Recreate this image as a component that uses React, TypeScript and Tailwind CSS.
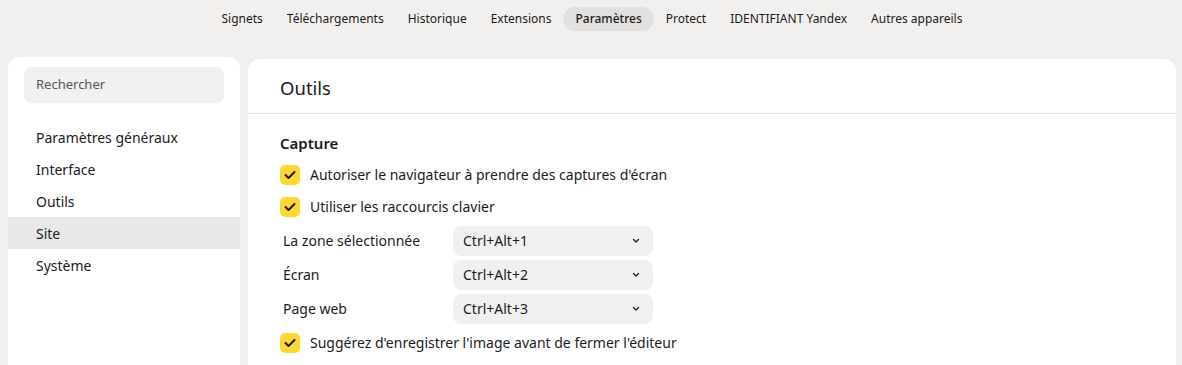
import React from "react";

const font = { fontFamily: '"Noto Sans", "Open Sans", sans-serif' };

function Check() {
  return (
    <span className="flex h-5 w-5 shrink-0 items-center justify-center rounded-[5px] bg-[#fdd835]">
      <svg width="12" height="10" viewBox="0 0 12 10" fill="none">
        <path d="M1.5 5 L4.5 8 L10.5 2" stroke="#1a1a1a" strokeWidth="2" strokeLinecap="round" strokeLinejoin="round" />
      </svg>
    </span>
  );
}

function Chevron() {
  return (
    <svg width="8" height="6" viewBox="0 0 8 6" fill="none">
      <path d="M1.5 1.5 L4 4 L6.5 1.5" stroke="#222" strokeWidth="1.4" strokeLinecap="round" strokeLinejoin="round" />
    </svg>
  );
}

export default function App() {
  const tabs = ["Signets", "Téléchargements", "Historique", "Extensions", "Paramètres", "Protect", "IDENTIFIANT Yandex", "Autres appareils"];
  const side = ["Paramètres généraux", "Interface", "Outils", "Site", "Système"];
  const shortcuts = [
    ["La zone sélectionnée", "Ctrl+Alt+1"],
    ["Écran", "Ctrl+Alt+2"],
    ["Page web", "Ctrl+Alt+3"],
  ];
  return (
    <div className="h-[365px] w-[1182px] overflow-hidden bg-[#f1f0ee] text-[#1b1b1b]" style={font}>
      <div className="flex h-[37px] items-center justify-center pl-[2px] pt-[1px] text-[12px]">
        {tabs.map((t) => (
          <span
            key={t}
            className={
              t === "Paramètres"
                ? "rounded-full bg-[#e2e1df] px-3 py-[3px] font-medium"
                : "px-3 py-[3px]"
            }
          >
            {t}
          </span>
        ))}
      </div>
      <div className="flex gap-2 px-2 pt-5">
        <div className="h-[320px] w-[232px] shrink-0 rounded-t-xl bg-white pt-[10px]">
          <div className="mx-4 flex h-9 items-center rounded-lg bg-[#f0f0f0] px-3 text-[13px] text-[#555]">
            Rechercher
          </div>
          <div className="mt-[18px] text-[14px]">
            {side.map((s) => (
              <div key={s} className={"flex h-8 items-center px-7 " + (s === "Site" ? "bg-[#e8e8e8]" : "")}>
                {s}
              </div>
            ))}
          </div>
        </div>
        <div className="mt-[2px] mr-[-2px] h-[320px] flex-1 rounded-t-xl bg-white">
          <div className="flex h-[55px] items-center border-b border-[#e4e4e4] px-8 pt-[3px] text-[18.5px]">Outils</div>
          <div className="px-8 pt-[18px] text-[14px]">
            <div className="text-[15px] font-semibold">Capture</div>
            <div className="mt-[10px] flex h-5 items-center gap-[10px]">
              <Check />
              <span>Autoriser le navigateur à prendre des captures d'écran</span>
            </div>
            <div className="mt-3 flex h-5 items-center gap-[10px]">
              <Check />
              <span>Utiliser les raccourcis clavier</span>
            </div>
            <div className="mt-[9px] flex flex-col gap-1">
              {shortcuts.map(([l, v]) => (
                <div key={l} className="flex items-center">
                  <span className="w-[173px] pl-[3px]">{l}</span>
                  <div className="flex h-[30px] w-[200px] items-center justify-between rounded-lg bg-[#f0f0f0] pl-[10px] pr-[13px] text-[14px]">
                    <span>{v}</span>
                    <Chevron />
                  </div>
                </div>
              ))}
            </div>
            <div className="mt-[9px] flex h-5 items-center gap-[10px]">
              <Check />
              <span>Suggérez d'enregistrer l'image avant de fermer l'éditeur</span>
            </div>
          </div>
        </div>
      </div>
    </div>
  );
}
